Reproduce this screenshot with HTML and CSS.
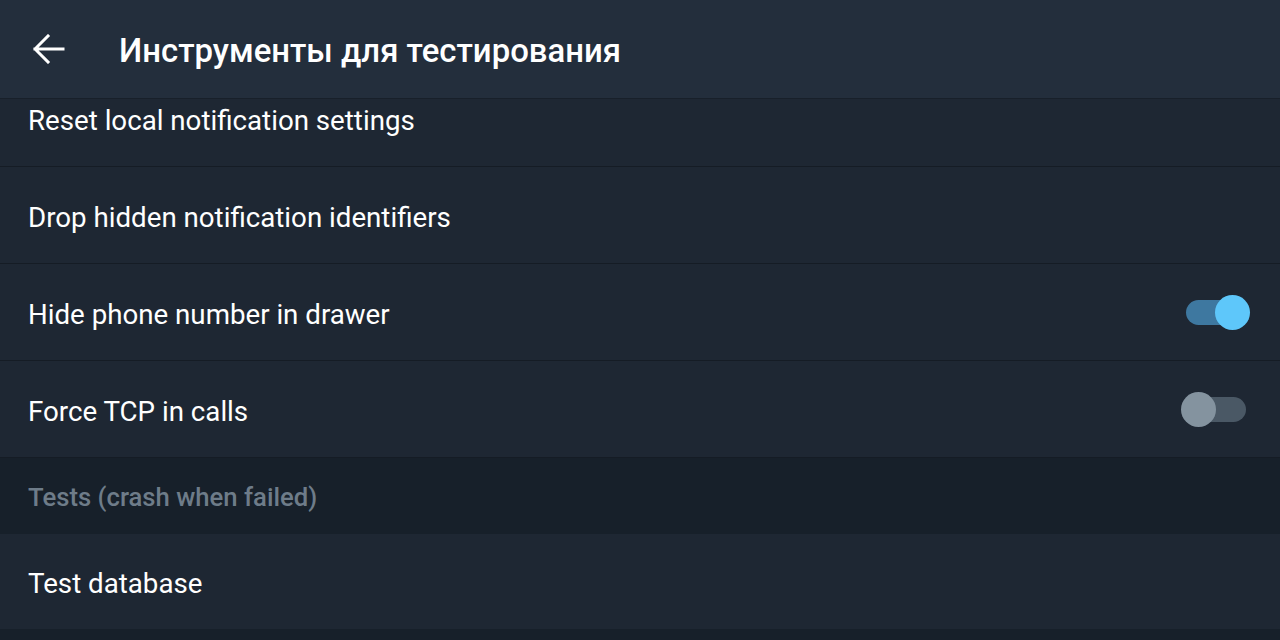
FILE: index.html
```html
<!DOCTYPE html>
<html lang="ru">
<head>
<meta charset="utf-8">
<title>Инструменты для тестирования</title>
<link rel="stylesheet" href="styles.css">
</head>
<body>
<div class="app">
  <header class="topbar">
    <button class="back" aria-label="Назад">
      <svg width="32" height="30" viewBox="0 0 32 30"><path d="M2 15H30M15 2L2 15L15 28" fill="none" stroke="#ffffff" stroke-width="3" stroke-linecap="square" stroke-linejoin="miter"/></svg>
    </button>
    <h1 class="title">Инструменты для тестирования</h1>
  </header>
  <div class="viewport">
    <div class="list">
      <div class="row"><span class="label">Reset local notification settings</span></div>
      <div class="row"><span class="label">Drop hidden notification identifiers</span></div>
      <div class="row"><span class="label">Hide phone number in drawer</span><span class="switch on"><span class="knob"></span></span></div>
      <div class="row"><span class="label">Force TCP in calls</span><span class="switch"><span class="knob"></span></span></div>
      <div class="section">Tests (crash when failed)</div>
      <div class="row last"><span class="label">Test database</span></div>
    </div>
  </div>
</div>
</body>
</html>
```
FILE: styles.css
```css
html, body {
  margin: 0;
  padding: 0;
  background: #17202a;
  font-family: Roboto, "Noto Sans", sans-serif;
}
.app {
  width: 1280px;
  height: 640px;
  display: flex;
  flex-direction: column;
  overflow: hidden;
}
.topbar {
  height: 99px;
  flex: none;
  background: #232e3c;
  border-bottom: 1px solid #18202a;
  display: flex;
  align-items: center;
  box-sizing: border-box;
}
.back {
  background: none;
  border: 0;
  padding: 0;
  margin-left: 33px;
  width: 32px;
  height: 30px;
  display: flex;
}
.title {
  margin: 0 0 0 54px;
  padding-top: 3px;
  color: #ffffff;
  font-size: 32.9px;
  font-weight: 500;
}
.viewport {
  flex: 1;
  overflow: hidden;
}
.list {
  margin-top: -29px;
  display: flex;
  flex-direction: column;
}
.row {
  height: 97px;
  box-sizing: border-box;
  background: #1e2733;
  border-bottom: 1px solid #151c25;
  display: flex;
  align-items: center;
  justify-content: space-between;
  padding: 0 34px 0 28px;
  flex: none;
}
.row.last {
  height: 95px;
  border-bottom: 0;
}
.label {
  color: #ffffff;
  font-size: 27.7px;
  padding-top: 4px;
}
.section {
  height: 76px;
  box-sizing: border-box;
  background: #17202a;
  color: #6e7c89;
  font-size: 25.7px;
  font-weight: 500;
  display: flex;
  align-items: center;
  padding: 2px 0 0 28px;
  flex: none;
}
.switch {
  position: relative;
  width: 60px;
  height: 25px;
  border-radius: 13px;
  background: #4a5865;
  display: inline-block;
}
.switch .knob {
  position: absolute;
  top: -5px;
  left: -5px;
  width: 35px;
  height: 35px;
  border-radius: 50%;
  background: #84939f;
}
.switch.on {
  background: #3e78a0;
}
.switch.on .knob {
  left: auto;
  right: -4px;
  background: #5ec7fa;
}
```
